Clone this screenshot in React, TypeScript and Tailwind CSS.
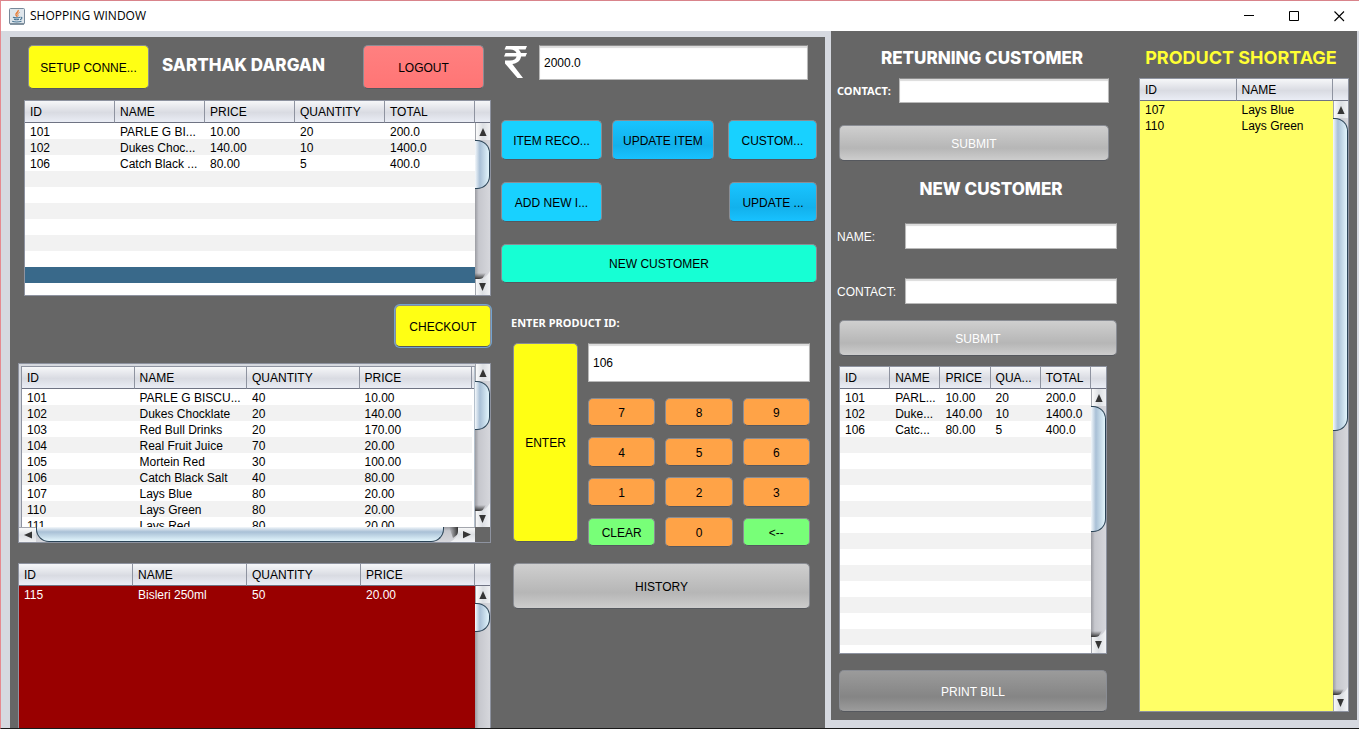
import React from "react";

type Rows = string[][];

const TONES = {
  yellow: "bg-[#ffff14] text-black",
  red: "bg-linear-to-b from-[#ff8080] to-[#ff7575] text-black",
  cyan: "bg-[#18d1ff] text-black",
  blue: "bg-linear-to-b from-[#19c4ff] via-[#12b1ec] via-65% to-[#18c2ff] text-black",
  teal: "bg-[#16ffd4] text-black",
  orange: "bg-[#ffa347] text-black",
  green: "bg-[#78ff78] text-black",
  silver: "bg-linear-to-b from-[#cfcfcf] via-[#b6b6b6] via-65% to-[#cdcdcd]",
  steel: "bg-linear-to-b from-[#9b9b9b] via-[#858585] via-65% to-[#9c9c9c] text-white",
};

function Button({ tone, className = "", children }: { tone: keyof typeof TONES; className?: string; children: React.ReactNode }) {
  return (
    <button
      type="button"
      className={`flex items-center justify-center whitespace-nowrap rounded-[5px] border border-[#8a8d94] border-b-[#55585e] pt-px ${TONES[tone]} ${className}`}
    >
      {children}
    </button>
  );
}

function TextBox({ className = "", ...rest }: React.InputHTMLAttributes<HTMLInputElement>) {
  return (
    <input
      type="text"
      className={`min-w-0 flex-1 border border-[#b9b9b9] border-t-[#8c8c8c] bg-white px-1 text-black shadow-[inset_0_2px_1px_#dcdcdc] outline-none ${className}`}
      {...rest}
    />
  );
}

function VerticalScroll({ thumb }: { thumb: string }) {
  return (
    <div className="flex min-h-0 w-[15px] flex-1 flex-col bg-linear-to-r from-[#9b9ca2] via-[#c6c7cd] via-25% to-[#d6d7dc]">
      <div className="flex h-[17px] shrink-0 items-center justify-center border-l border-[#a3a6ad] bg-linear-to-r from-[#fbfbfb] via-[#dcdfe3] to-[#f0f1f3]">
        <svg width="8" height="8" viewBox="0 0 8 8" aria-hidden="true">
          <path d="M4 0 7.6 8H.4Z" fill="#353535" />
        </svg>
      </div>
      <div className="min-h-0 flex-1">
        <div className={`w-[15px] rounded-r-[13px] border border-l-0 border-[#2b4457] bg-linear-to-r from-[#f4f8fb] via-[#a9c0d6] via-35% to-[#e2f5fc] ${thumb}`} />
      </div>
      <svg className="shrink-0" width="15" height="24" viewBox="0 0 15 24" aria-hidden="true">
        <defs>
          <linearGradient id="capShade" x1="0" y1="0" x2="0" y2="1">
            <stop offset="0" stopColor="#444" stopOpacity="0" />
            <stop offset="1" stopColor="#333" />
          </linearGradient>
          <linearGradient id="capFace" x1="0" y1="0" x2="1" y2="0">
            <stop offset="0" stopColor="#fbfbfb" />
            <stop offset="0.5" stopColor="#dcdfe3" />
            <stop offset="1" stopColor="#f2f3f5" />
          </linearGradient>
        </defs>
        <path d="M0 2H11L7 8H0Z" fill="url(#capShade)" />
        <path d="M0 8H4C9 8 13 4 15 0V24H0Z" fill="url(#capFace)" />
        <path d="M.5 8V24" stroke="#a3a6ad" />
        <path d="M.6 12H7.4L4 20Z" transform="translate(3.5 0)" fill="#353535" />
      </svg>
    </div>
  );
}

function HorizontalScroll() {
  return (
    <div className="flex h-[15px] min-w-0 flex-1 bg-linear-to-b from-[#9b9ca2] via-[#c6c7cd] via-25% to-[#d6d7dc]">
      <div className="flex w-[17px] shrink-0 items-center justify-center border-t border-[#a3a6ad] bg-linear-to-b from-[#fbfbfb] via-[#dcdfe3] to-[#f0f1f3]">
        <svg width="8" height="8" viewBox="0 0 8 8" aria-hidden="true">
          <path d="M0 4 8 .4V7.6Z" fill="#353535" />
        </svg>
      </div>
      <div className="min-w-0 flex-1 rounded-b-[13px] border border-t-0 border-[#2b4457] bg-linear-to-b from-[#f4f8fb] via-[#a9c0d6] via-35% to-[#e2f5fc]" />
      <svg className="shrink-0" width="31" height="15" viewBox="0 0 31 15" aria-hidden="true">
        <defs>
          <linearGradient id="endShade" x1="0" y1="0" x2="1" y2="0">
            <stop offset="0" stopColor="#444" stopOpacity="0" />
            <stop offset="1" stopColor="#333" />
          </linearGradient>
          <linearGradient id="endFace" x1="0" y1="0" x2="0" y2="1">
            <stop offset="0" stopColor="#fbfbfb" />
            <stop offset="0.5" stopColor="#dcdfe3" />
            <stop offset="1" stopColor="#f2f3f5" />
          </linearGradient>
        </defs>
        <path d="M5 0H14V7L9 11Z" fill="url(#endShade)" />
        <path d="M14 0V4C14 9 10 13 6 15H31V0Z" fill="url(#endFace)" />
        <path d="M14 .5H31" stroke="#a3a6ad" />
        <path d="M19 4 27 7.6 19 11.2Z" fill="#353535" />
      </svg>
    </div>
  );
}

const HEADER_FILL = "bg-linear-to-b from-[#f6f7f9] via-[#d9dbe2] via-55% to-[#eaedf5]";

function DataTable({ label, columns, rows, tone = "striped" }: { label: string; columns: string[]; rows: Rows; tone?: "striped" | "plain" }) {
  return (
    <table aria-label={label} className="w-full table-fixed border-separate border-spacing-0">
      <thead>
        <tr>
          {columns.map((c) => (
            <th key={c} scope="col" className={`h-[22px] overflow-hidden whitespace-nowrap border-r border-b border-r-[#8e93a0] border-b-[#6f7383] py-0 pr-0 pl-[5px] text-left font-normal text-black ${HEADER_FILL}`}>
              {c}
            </th>
          ))}
        </tr>
      </thead>
      <tbody>
        {rows.map((row, i) => (
          <tr
            key={i}
            className={tone === "plain" ? "" : row[0] === "selected" ? "bg-[#39698a]" : "odd:bg-white even:bg-[#f2f2f2]"}
          >
            {columns.map((c, j) => (
              <td key={c} className="h-4 overflow-hidden whitespace-nowrap pt-[2px] pr-0 pb-0 pl-[5px] leading-[14px]">
                {row[0] === "selected" ? "" : row[j]}
              </td>
            ))}
          </tr>
        ))}
      </tbody>
    </table>
  );
}

function ScrollTable({ thumb, fill, className, ...table }: { thumb: string; fill: string; className: string; label: string; columns: string[]; rows: Rows; tone?: "striped" | "plain" }) {
  return (
    <div className={`flex overflow-hidden border border-[#8e93a0] ${className}`}>
      <div className={`min-w-0 flex-1 overflow-hidden ${fill}`}>
        <DataTable {...table} />
      </div>
      <div className="flex w-[15px] shrink-0 flex-col">
        <div className={`h-[22px] shrink-0 border-b border-[#6f7383] ${HEADER_FILL}`} />
        <VerticalScroll thumb={thumb} />
      </div>
    </div>
  );
}

const blank = (n: number): Rows => Array.from({ length: n }, () => []);

const cart: Rows = [
  ["101", "PARLE G BI...", "10.00", "20", "200.0"],
  ["102", "Dukes Choc...", "140.00", "10", "1400.0"],
  ["106", "Catch Black ...", "80.00", "5", "400.0"],
  ...blank(6),
  ["selected"],
  [],
];

const bill: Rows = [
  ["101", "PARL...", "10.00", "20", "200.0"],
  ["102", "Duke...", "140.00", "10", "1400.0"],
  ["106", "Catc...", "80.00", "5", "400.0"],
  ...blank(14),
];

const stock: Rows = [
  ["101", "PARLE G BISCU...", "40", "10.00"],
  ["102", "Dukes Chocklate", "20", "140.00"],
  ["103", "Red Bull Drinks", "20", "170.00"],
  ["104", "Real Fruit Juice", "70", "20.00"],
  ["105", "Mortein Red", "30", "100.00"],
  ["106", "Catch Black Salt", "40", "80.00"],
  ["107", "Lays Blue", "80", "20.00"],
  ["110", "Lays Green", "80", "20.00"],
  ["111", "Lays Red", "80", "20.00"],
];

const keys: { text: string; tone: "orange" | "green"; size: string }[] = [
  { text: "7", tone: "orange", size: "h-7" },
  { text: "8", tone: "orange", size: "h-7" },
  { text: "9", tone: "orange", size: "h-7" },
  { text: "4", tone: "orange", size: "h-[30px]" },
  { text: "5", tone: "orange", size: "h-7" },
  { text: "6", tone: "orange", size: "h-7" },
  { text: "1", tone: "orange", size: "h-7" },
  { text: "2", tone: "orange", size: "h-[30px]" },
  { text: "3", tone: "orange", size: "h-[30px]" },
  { text: "CLEAR", tone: "green", size: "h-7" },
  { text: "0", tone: "orange", size: "h-[30px]" },
  { text: "<--", tone: "green", size: "h-7" },
];

const HEADING = "font-['Inter',sans-serif] leading-6 whitespace-nowrap";
const WHITE_HEADING = `${HEADING} text-[17px] font-extrabold text-white`;
const BOLD_LABEL = "font-['Noto_Sans',sans-serif] text-[11px] leading-4 font-bold text-white whitespace-nowrap";

function JavaIcon() {
  return (
    <svg width="16" height="17" viewBox="0 0 16 17" aria-hidden="true">
      <rect x=".5" y=".5" width="15" height="15.5" rx="1" fill="#dfe6ec" stroke="#77899a" />
      <path d="M1 16h14" stroke="#4f6475" />
      <path d="M9.2 2C10 4 6 5 7 7c.3.8.8 1 .8 1.8" fill="none" stroke="#e8762b" strokeWidth="1.3" />
      <path d="M10.6 4.4C8.6 5.2 8.4 6 9 7.2c.2.6 0 1-.4 1.4" fill="none" stroke="#e8762b" />
      <path d="M4 9.3c1 .8 5.5.8 7 0M5 11.3c1.4.5 3.8.5 5 0M3.200 13.3c2 .9 7 .9 9.3 0M11.5 9.3c2.3-.3 1.5 2-.5 2.3" fill="none" stroke="#4a7694" strokeWidth="1.1" />
    </svg>
  );
}

function TitleBar() {
  return (
    <header className="flex h-[30px] shrink-0 items-center justify-between bg-white pr-[14px] pl-2">
      <div className="flex items-center gap-[5px]">
        <JavaIcon />
        <span className="font-['Open_Sans',sans-serif] text-xs text-black">SHOPPING WINDOW</span>
      </div>
      <div className="flex gap-[34px]">
        <button type="button" aria-label="Minimize">
          <svg width="11" height="11" viewBox="0 0 11 11"><path d="M0 4.5h10" stroke="#000" /></svg>
        </button>
        <button type="button" aria-label="Maximize">
          <svg width="11" height="11" viewBox="0 0 11 11"><path d="M.5.5h9v9h-9z" fill="none" stroke="#000" /></svg>
        </button>
        <button type="button" aria-label="Close">
          <svg width="11" height="11" viewBox="0 0 11 11"><path d="M.5.5l9.500 9.500M10 .5L.5 10" stroke="#000" strokeWidth="1.1" /></svg>
        </button>
      </div>
    </header>
  );
}

function Inventory() {
  return (
    <section className="flex min-h-0 min-w-0 flex-col">
      <div className="flex shrink-0 pr-[7px] pl-[10px]">
        <Button tone="yellow" className="h-[44px] w-[121px]">SETUP CONNE...</Button>
        <h1 className={`ml-[13px] flex-1 self-center pb-1 ${WHITE_HEADING}`}>SARTHAK DARGAN</h1>
        <Button tone="red" className="h-[44px] w-[121px]">LOGOUT</Button>
      </div>
      <ScrollTable
        label="Cart"
        columns={["ID", "NAME", "PRICE", "QUANTITY", "TOTAL"]}
        rows={cart}
        thumb="h-[49px]"
        fill="bg-white"
        className="mt-[11px] ml-[6px] h-[196px] shrink-0"
      />
      <Button tone="yellow" className="mt-[9px] h-[42px] w-24 shrink-0 self-end border-[#5b7fa8] ring-1 ring-[#73a4d1]">CHECKOUT</Button>
      <div className="mt-4 flex h-[180px] shrink-0 flex-col border border-[#8e93a0]">
        <div className="flex min-h-0 flex-1">
          <div className="flex min-w-0 flex-1 overflow-hidden bg-[#d6d9df] pt-[2px] pl-[2px]">
            <div className="flex min-w-0 flex-1 overflow-hidden border-t border-l border-[#8e93a0] bg-white">
              <div className="min-w-0 flex-1">
                <DataTable label="Stock" columns={["ID", "NAME", "QUANTITY", "PRICE"]} rows={stock} />
              </div>
              <div className="w-[3px] border-r border-[#b4c0cc]">
                <div className={`h-[22px] border-b border-[#6f7383] ${HEADER_FILL}`} />
              </div>
            </div>
          </div>
          <div className="flex w-[15px] shrink-0 flex-col">
            <VerticalScroll thumb="h-[49px]" />
          </div>
        </div>
        <div className="flex h-[15px] shrink-0 pr-[15px]">
          <HorizontalScroll />
        </div>
      </div>
      <ScrollTable
        label="Low stock"
        columns={["ID", "NAME", "QUANTITY", "PRICE"]}
        rows={[["115", "Bisleri 250ml", "50", "20.00"]]}
        tone="plain"
        thumb="h-[29px]"
        fill="bg-[#990000] text-white"
        className="mt-5 -mb-10 min-h-[200px] flex-1"
      />
    </section>
  );
}

function Register() {
  return (
    <section className="flex min-w-0 flex-col">
      <div className="flex h-[35px] gap-3 pr-[9px] pl-[2px]">
        <svg width="24" height="34" viewBox="0 0 24 34" className="shrink-0 text-white" role="img" aria-label="Rupees">
          <path d="M3 1H24L22.5 4.5H15.5C16.8 5.6 17.5 6.7 17.9 8H24L22.5 11.5H18.1C17.4 16 14 18.6 9.3 18.9L20 33H14.5L2 18.5V15.6H7C10.7 15.6 13 14.2 13.6 11.5H1L2.5 8H13.5C12.6 5.7 10.5 4.5 7.5 4.5H1.5Z" fill="currentColor" />
        </svg>
        <TextBox aria-label="Amount in rupees" defaultValue="2000.0" />
      </div>
      <div className="mt-10 flex h-10 gap-[10px]">
        <Button tone="cyan" className="flex-[101]">ITEM RECO...</Button>
        <Button tone="blue" className="flex-[102]">UPDATE ITEM</Button>
        <Button tone="cyan" className="ml-1 flex-[89]">CUSTOM...</Button>
      </div>
      <div className="mt-[22px] flex h-10 justify-between">
        <Button tone="cyan" className="w-[101px]">ADD NEW I...</Button>
        <Button tone="blue" className="w-[88px]">UPDATE ...</Button>
      </div>
      <Button tone="teal" className="mt-[22px] h-[39px]">NEW CUSTOMER</Button>
      <div className="mt-8 pr-[7px] pl-3">
        <label htmlFor="product" className={`-ml-[2px] block ${BOLD_LABEL}`}>ENTER PRODUCT ID:</label>
        <div className="mt-3 flex gap-[10px]">
          <Button tone="yellow" className="h-[199px] w-[65px] shrink-0">ENTER</Button>
          <div className="min-w-0 flex-1">
            <div className="flex h-[39px]">
              <TextBox id="product" defaultValue="106" />
            </div>
            <div className="mt-[10px] grid auto-rows-[40px] grid-cols-3 items-center gap-x-[10px]">
              {keys.map((k) => (
                <Button key={k.text} tone={k.tone} className={k.size}>{k.text}</Button>
              ))}
            </div>
          </div>
        </div>
        <Button tone="silver" className="mt-[11px] h-[46px] w-full text-black">HISTORY</Button>
      </div>
    </section>
  );
}

function Customers() {
  return (
    <section className="flex min-w-0 flex-col text-white">
      <h2 className={`pl-[10px] text-center ${WHITE_HEADING}`}>RETURNING CUSTOMER</h2>
      <div className="mt-2 mr-2 flex h-[25px] items-stretch">
        <label htmlFor="returning" className={`w-[62px] self-center ${BOLD_LABEL}`}>CONTACT:</label>
        <TextBox id="returning" />
      </div>
      <Button tone="silver" className="mt-[22px] mr-2 ml-[2px] h-9 text-white">SUBMIT</Button>
      <h2 className={`mt-4 pl-7 text-center ${WHITE_HEADING}`}>NEW CUSTOMER</h2>
      <div className="mt-[22px] flex h-[26px]">
        <label htmlFor="name" className="w-[68px] self-center pt-[2px]">NAME:</label>
        <TextBox id="name" />
      </div>
      <div className="mt-[29px] flex h-[26px]">
        <label htmlFor="contact" className="w-[68px] self-center pt-[2px]">CONTACT:</label>
        <TextBox id="contact" />
      </div>
      <Button tone="silver" className="mt-4 ml-[2px] h-9 text-white">SUBMIT</Button>
      <ScrollTable
        label="Bill"
        columns={["ID", "NAME", "PRICE", "QUA...", "TOTAL"]}
        rows={bill}
        thumb="h-[126px]"
        fill="bg-white text-black"
        className="mt-[10px] mr-[10px] ml-[2px] h-[288px]"
      />
      <Button tone="steel" className="mt-4 mr-[10px] ml-[2px] h-[42px]">PRINT BILL</Button>
    </section>
  );
}

function Shortage() {
  return (
    <section className="flex min-w-0 flex-col">
      <h2 className={`pr-[6px] text-center text-lg leading-6 font-bold text-[#ffff33] ${HEADING}`}>PRODUCT SHORTAGE</h2>
      <ScrollTable
        label="Product shortage"
        columns={["ID", "NAME"]}
        rows={[["107", "Lays Blue"], ["110", "Lays Green"]]}
        tone="plain"
        thumb="h-[313px]"
        fill="bg-[#ffff66] text-black"
        className="mt-2 flex-1"
      />
    </section>
  );
}

export default function App() {
  return (
    <div className="flex h-screen flex-col overflow-hidden border-t border-b border-l border-t-[#d9848b] border-b-[#1a1a1a] border-l-[#e58a90] bg-[#d6d9e0] font-['Liberation_Sans',Arial,sans-serif] text-xs">
      <TitleBar />
      <main className="grid min-h-0 flex-1 grid-cols-[815fr_526fr] grid-rows-[minmax(0,1fr)] gap-[6px] pr-[2px] pl-[9px]">
        <div className="mt-[6px] grid min-w-0 grid-cols-[473fr_316fr] grid-rows-[minmax(0,1fr)] gap-[10px] overflow-hidden bg-[#666666] px-2 pt-2">
          <Inventory />
          <Register />
        </div>
        <div className="mb-2 grid min-w-0 grid-cols-[280fr_210fr] gap-[22px] bg-[#666666] pt-[15px] pr-2 pb-2 pl-[6px]">
          <Customers />
          <Shortage />
        </div>
      </main>
    </div>
  );
}
